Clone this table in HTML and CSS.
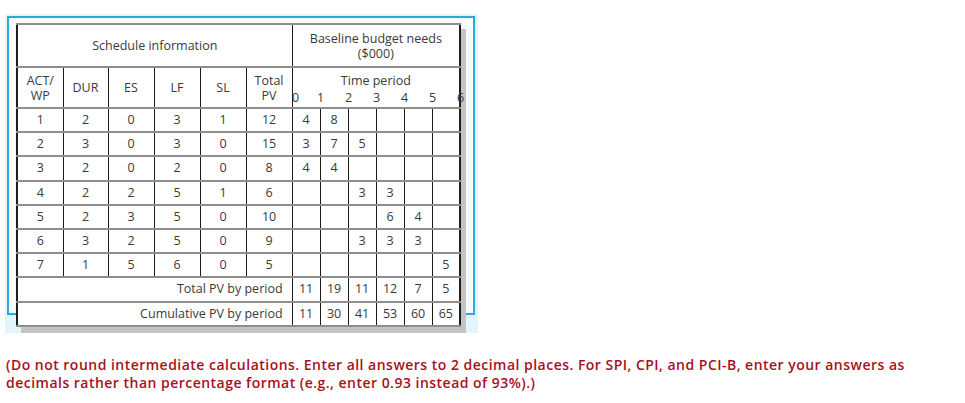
FILE: index.html
```html
<!DOCTYPE html>
<html>
<head>
<meta charset="utf-8">
<link rel="stylesheet" href="styles.css">
</head>
<body>
<div class="frame">
  <table class="sched">
    <colgroup>
      <col class="c-act"><col class="c-dur"><col class="c-s"><col class="c-s"><col class="c-s"><col class="c-s">
      <col class="c-t"><col class="c-t"><col class="c-t"><col class="c-t"><col class="c-t"><col class="c-t">
    </colgroup>
    <tr class="r-h1">
      <td colspan="6">Schedule information</td>
      <td colspan="6" class="two">Baseline budget needs<br>($000)</td>
    </tr>
    <tr class="r-h2">
      <td class="two">ACT/<br>WP</td>
      <td>DUR</td>
      <td>ES</td>
      <td>LF</td>
      <td>SL</td>
      <td class="two">Total<br>PV</td>
      <td colspan="6" class="tp">
        <div class="tp-title">Time period</div>
        <div class="tp-nums"><span class="n0">0</span><span>1</span><span>2</span><span>3</span><span>4</span><span>5</span><span>6</span></div>
      </td>
    </tr>
    <tr><td>1</td><td>2</td><td>0</td><td>3</td><td>1</td><td>12</td><td>4</td><td>8</td><td></td><td></td><td></td><td></td></tr>
    <tr><td>2</td><td>3</td><td>0</td><td>3</td><td>0</td><td>15</td><td>3</td><td>7</td><td>5</td><td></td><td></td><td></td></tr>
    <tr><td>3</td><td>2</td><td>0</td><td>2</td><td>0</td><td>8</td><td>4</td><td>4</td><td></td><td></td><td></td><td></td></tr>
    <tr><td>4</td><td>2</td><td>2</td><td>5</td><td>1</td><td>6</td><td></td><td></td><td>3</td><td>3</td><td></td><td></td></tr>
    <tr><td>5</td><td>2</td><td>3</td><td>5</td><td>0</td><td>10</td><td></td><td></td><td></td><td>6</td><td>4</td><td></td></tr>
    <tr><td>6</td><td>3</td><td>2</td><td>5</td><td>0</td><td>9</td><td></td><td></td><td>3</td><td>3</td><td>3</td><td></td></tr>
    <tr><td>7</td><td>1</td><td>5</td><td>6</td><td>0</td><td>5</td><td></td><td></td><td></td><td></td><td></td><td>5</td></tr>
    <tr><td colspan="6" class="lbl">Total PV by period</td><td>11</td><td>19</td><td>11</td><td>12</td><td>7</td><td>5</td></tr>
    <tr><td colspan="6" class="lbl">Cumulative PV by period</td><td>11</td><td>30</td><td>41</td><td>53</td><td>60</td><td>65</td></tr>
  </table>
</div>
<p class="note">(Do not round intermediate calculations. Enter all answers to 2 decimal places. For SPI, CPI, and PCI-B, enter your answers as decimals rather than percentage format (e.g., enter 0.93 instead of 93%).)</p>
</body>
</html>
```

FILE: styles.css
```css
html, body {
  margin: 0;
  padding: 0;
  background: #ffffff;
}

.frame {
  position: relative;
  margin: 14px 0 0 5px;
  width: 473px;
  height: 319px;
  box-sizing: border-box;
  padding: 9px 0 0 11px;
  background: #e2f4fc;
}

.frame::before {
  content: "";
  position: absolute;
  left: 2px;
  top: 2px;
  width: 468px;
  height: 299px;
  box-sizing: border-box;
  border: 2px solid #2aa8e0;
  background: #f4fbfe;
}

.sched {
  position: relative;
  border-collapse: collapse;
  table-layout: fixed;
  width: 445px;
  background: #ffffff;
  border: 2px solid #1e1e1e;
  box-shadow: 5px 6px 0 #c4c4c4;
  font-family: "Open Sans", sans-serif;
  font-size: 12.5px;
  color: #3a3a3a;
}

.c-act { width: 46px; }
.c-dur { width: 45px; }
.c-s { width: 46px; }
.c-t { width: 28px; }

.sched td {
  padding: 0;
  text-align: center;
  vertical-align: middle;
  border-left: 1px solid #1a1a1a;
  border-right: 1px solid #1a1a1a;
  border-top: 2px solid #8e8e8e;
  border-bottom: 2px solid #8e8e8e;
  height: 22.2px;
  line-height: 16px;
}

.sched td.two {
  line-height: 15px;
}

.sched tr.r-h1 td {
  height: 41px;
}

.sched tr.r-h2 td {
  height: 39px;
}

.sched td.lbl {
  text-align: right;
  padding-right: 9px;
}

.tp {
  vertical-align: top;
}

.tp-title {
  margin-top: 4px;
  line-height: 16px;
}

.tp-nums {
  display: flex;
  margin-left: -14px;
  line-height: 17px;
}

.tp-nums span {
  width: 28px;
  flex: 0 0 28px;
  text-align: center;
}

.tp-nums span.n0 {
  padding-left: 6px;
  box-sizing: border-box;
}

.note {
  margin: 23px 0 0 6px;
  width: 915px;
  font-family: "Open Sans", sans-serif;
  font-weight: 600;
  font-size: 14px;
  letter-spacing: 0.48px;
  line-height: 18px;
  color: #a8101c;
}
```
